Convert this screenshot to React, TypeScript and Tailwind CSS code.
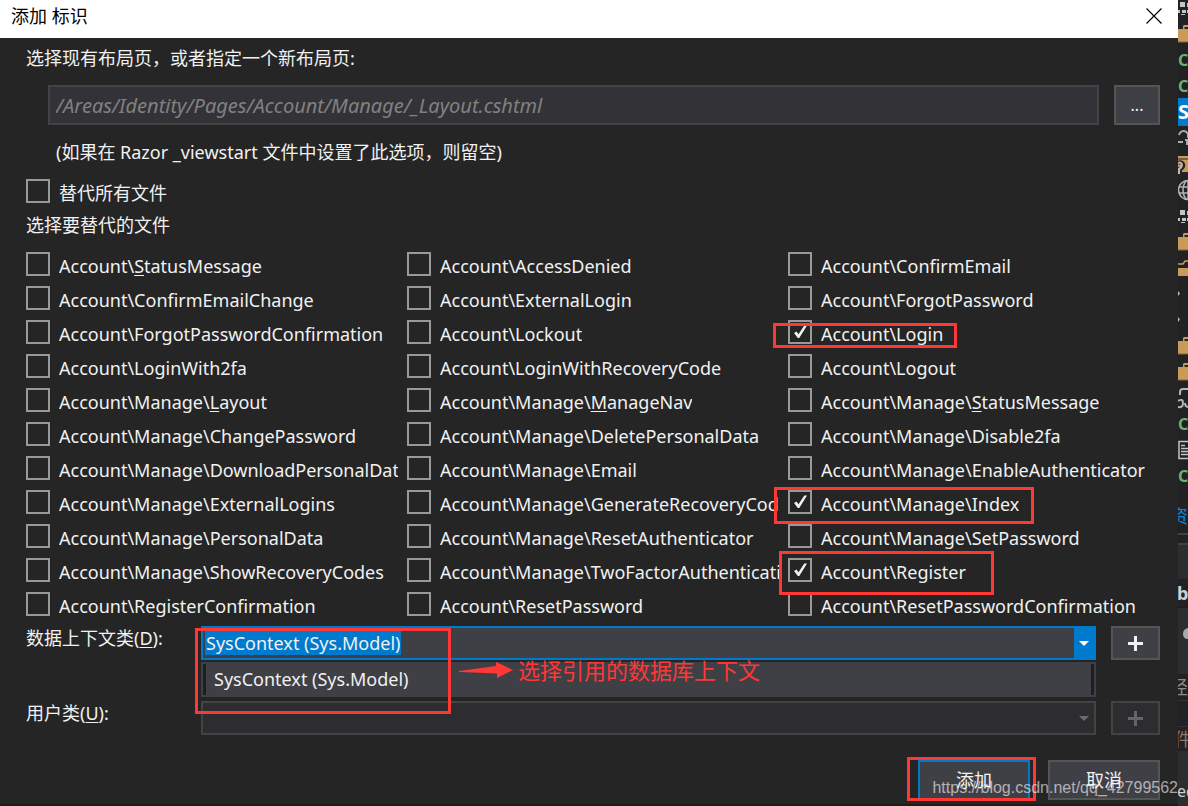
import { ReactNode } from 'react';

type FileOption = { name: string; checked?: boolean; ring?: string };

/* An underscore in a file name marks the next letter as its access key. */
const files: FileOption[] = [
  { name: 'Account\\_StatusMessage' },
  { name: 'Account\\AccessDenied' },
  { name: 'Account\\ConfirmEmail' },
  { name: 'Account\\ConfirmEmailChange' },
  { name: 'Account\\ExternalLogin' },
  { name: 'Account\\ForgotPassword' },
  { name: 'Account\\ForgotPasswordConfirmation' },
  { name: 'Account\\Lockout' },
  { name: 'Account\\Login', checked: true, ring: '-left-[15px] top-[3px] w-[184px] h-[25px]' },
  { name: 'Account\\LoginWith2fa' },
  { name: 'Account\\LoginWithRecoveryCode' },
  { name: 'Account\\Logout' },
  { name: 'Account\\Manage\\_Layout' },
  { name: 'Account\\Manage\\_ManageNav' },
  { name: 'Account\\Manage\\_StatusMessage' },
  { name: 'Account\\Manage\\ChangePassword' },
  { name: 'Account\\Manage\\DeletePersonalData' },
  { name: 'Account\\Manage\\Disable2fa' },
  { name: 'Account\\Manage\\DownloadPersonalData' },
  { name: 'Account\\Manage\\Email' },
  { name: 'Account\\Manage\\EnableAuthenticator' },
  { name: 'Account\\Manage\\ExternalLogins' },
  { name: 'Account\\Manage\\GenerateRecoveryCodes' },
  { name: 'Account\\Manage\\Index', checked: true, ring: '-left-[14px] -top-[3px] w-[260px] h-[37px]' },
  { name: 'Account\\Manage\\PersonalData' },
  { name: 'Account\\Manage\\ResetAuthenticator' },
  { name: 'Account\\Manage\\SetPassword' },
  { name: 'Account\\Manage\\ShowRecoveryCodes' },
  { name: 'Account\\Manage\\TwoFactorAuthentication' },
  { name: 'Account\\Register', checked: true, ring: '-left-[9px] -top-[7px] w-[215px] h-[44px]' },
  { name: 'Account\\RegisterConfirmation' },
  { name: 'Account\\ResetPassword' },
  { name: 'Account\\ResetPasswordConfirmation' },
];

function AccessText({ text }: { text: string }) {
  const i = text.indexOf('_');
  if (i < 0) return <>{text}</>;
  return (
    <>
      {text.slice(0, i)}
      <span className="underline underline-offset-2">{text[i + 1]}</span>
      {text.slice(i + 2)}
    </>
  );
}

function Ring({ className }: { className: string }) {
  return <span aria-hidden="true" className={`pointer-events-none absolute z-20 border-[3px] border-[#ff3835] ${className}`} />;
}

function Check({ children, checked, ring }: { children: ReactNode; checked?: boolean; ring?: string }) {
  return (
    <label className="relative flex h-6 min-w-0 gap-[9px]">
      <span className="grid size-6 shrink-0">
        <input
          type="checkbox"
          defaultChecked={checked}
          className="peer col-start-1 row-start-1 size-6 appearance-none border-2 border-[#999999] bg-[#252526]"
        />
        <svg viewBox="0 0 24 24" className="pointer-events-none col-start-1 row-start-1 hidden size-6 peer-checked:block">
          <path d="M6 13 8.5 11.5 10.5 14.3 16.3 5.5 19 5.5 11.3 18 9.8 18Z" fill="#f1f1f1" />
        </svg>
      </span>
      <span className="h-7 min-w-0 overflow-hidden whitespace-nowrap pt-[2px] leading-6">{children}</span>
      {ring && <Ring className={ring} />}
    </label>
  );
}

function Plus() {
  return (
    <svg viewBox="0 0 15 15" className="mx-auto size-[15px] fill-current">
      <path d="M6 0h3v6h6v3H9v6H6V9H0V6h6z" />
    </svg>
  );
}

function Caret() {
  return (
    <svg viewBox="0 0 10 5" className="h-[5px] w-[10px] fill-current">
      <path d="M0 0h10L5 5z" />
    </svg>
  );
}

const icon = 'block h-[26px] w-[26px] shrink-0';

function Dots() {
  return (
    <svg viewBox="0 0 26 26" className={icon} fill="#c4c4c4">
      <path d="M2 7h5v5H2zM9 8h4v4H9zM0 15h2v3H0zM4 15h4v3H4zM3 19h4v1H3zM9 15h4v3H9z" />
    </svg>
  );
}

function Folder() {
  return (
    <svg viewBox="0 0 26 26" className={icon}>
      <path d="M0 8h5V5l1-1h12v4h4v13H0z" fill="#c89b5b" />
      <path d="M6.5 8V6H20v2z" fill="#252526" />
      <path d="M0 21h22" stroke="#8b6633" />
    </svg>
  );
}

function CSharp() {
  return <span className="block h-[26px] shrink-0 text-base leading-[26px] font-bold text-[#6fb36f]">C#</span>;
}

function Arrow() {
  return (
    <svg viewBox="0 0 26 26" className={icon} fill="#bbb">
      <path d="M0 10l2 2.5-2 2.5z" />
    </svg>
  );
}

function Explorer() {
  return (
    <aside aria-label="解决方案资源管理器" className="flex w-[10px] shrink-0 flex-col overflow-hidden bg-[#222224] text-[#d0d0d0]">
      <div className="-mt-[5px]" />
      <Dots />
      <Folder />
      <CSharp />
      <CSharp />
      <span className="my-[-1px] block h-7 w-[26px] shrink-0 bg-[#007acc] text-xl leading-7 font-bold text-white">S</span>
      <svg viewBox="0 0 26 26" className={icon} fill="none" stroke="#aaa" strokeWidth="2">
        <path d="M1 10c1-4 6-6 9-1v4M0 17h5M7 15h5M9 15v5" />
      </svg>
      <svg viewBox="0 0 26 26" className={icon}>
        <path d="M0 5h20v16H0z" fill="#c89b5b" />
        <path d="M0 8h20" stroke="#252526" />
        <path d="M0 12c6-3 7 5 2 6v6" fill="none" stroke="#222" strokeWidth="4" />
        <path d="M0 12c5-2 5 4 1 6v5" fill="none" stroke="#bbb" strokeWidth="2" />
      </svg>
      <svg viewBox="0 0 26 26" className={icon} fill="none" stroke="#b4b4b4" strokeWidth="1.5">
        <circle cx="10" cy="13" r="9.5" />
        <ellipse cx="10" cy="13" rx="5" ry="9.5" />
        <path d="M1 10h18M1 16h18M10 3v20" />
      </svg>
      <Dots />
      <Folder />
      <svg viewBox="0 0 26 26" className={icon}>
        <path d="M0 9h5l2-3h4" fill="none" stroke="#c89b5b" strokeWidth="1.5" />
        <path d="M0 13h14v8H0z" fill="#c89b5b" />
      </svg>
      <Arrow />
      <Arrow />
      <Folder />
      <Folder />
      <svg viewBox="0 0 26 26" className={icon} fill="none" stroke="#b4b4b4" strokeWidth="2">
        <path d="M2 10V7q0-3 3-3h12M0 16q5-3 5 2 0 5-5 4M7 18q0 4 4 4" />
      </svg>
      <CSharp />
      <svg viewBox="0 0 26 26" className={icon} fill="none" stroke="#c4c4c4">
        <path d="M1 4.5h15v17H1zM3 8.5h4M3 11.5h10M3 14.5h10M3 17.5h10" strokeWidth="1.5" />
      </svg>
      <CSharp />
      <span className="mt-[14px] -ml-2 block h-[26px] w-[26px] shrink-0 text-lg leading-[26px] text-[#1283d8]">资</span>
      <div className="mt-1 h-3 shrink-0 border-y-2 border-[#3f3f46]" />
      <div className="h-[34px] shrink-0 bg-[#2d2d30]" />
      <span className="-ml-px block h-7 shrink-0 text-lg leading-7 font-bold">b</span>
      <div className="h-[67px] shrink-0 border-t border-[#1c1c1e] bg-[#2d2d30] pt-[17px]">
        <svg viewBox="0 0 10 16" className="h-4 w-[10px]" fill="#aaa">
          <path d="M5 9q0-5 5-6v11q-5 0-5-5z" />
        </svg>
      </div>
      <span className="-ml-2 block h-[26px] w-[26px] shrink-0 text-lg leading-[26px] text-[#8a8a8a]">径</span>
      <div className="h-[27px] shrink-0 border-y border-[#333337]" />
      <span className="-ml-1 block h-6 w-[26px] shrink-0 text-lg leading-6 text-[#8a7a66]">件</span>
      <div className="flex-1 bg-[#2d2d30] pt-7">
        <span className="-ml-px block text-base leading-6">ed</span>
      </div>
    </aside>
  );
}

export default function App() {
  return (
    <div className="flex min-h-screen overflow-hidden bg-[#252526] font-['Noto_Sans','Noto_Sans_CJK_SC',sans-serif] text-lg leading-6 text-[#f1f1f1]">
      <div role="dialog" aria-labelledby="dialog-title" className="relative min-w-0 flex-1 border-b-2 border-[#1e1a1e]">
        <header className="flex h-[38px] items-center justify-between bg-white pr-4 pb-[6px] pl-[11px] text-black">
          <h1 id="dialog-title">添加 标识</h1>
          <button type="button" aria-label="关闭" className="grid size-4 place-items-center">
            <svg viewBox="0 0 16 16" className="size-4" fill="none" stroke="#000" strokeWidth="1.2">
              <path d="M.5.5l15 15M15.5.5l-15 15" />
            </svg>
          </button>
        </header>

        <form className="pt-2 pr-[18px] pb-1 pl-[26px]">
          <label htmlFor="layout-page" className="block">选择现有布局页，或者指定一个新布局页:</label>
          <div className="mt-[15px] flex gap-[15px] pl-[22px]">
            <input
              id="layout-page"
              type="text"
              placeholder="/Areas/Identity/Pages/Account/Manage/_Layout.cshtml"
              className="h-10 min-w-0 flex-1 border-2 border-[#434346] bg-[#333337] px-[6px] text-xl italic placeholder:text-[#818181]"
            />
            <button type="button" className="h-10 w-[46px] border-2 border-[#555555] bg-[#3f3f46] text-base">...</button>
          </div>
          <p className="mt-[15px] pl-[30px]">(如果在 Razor _viewstart 文件中设置了此选项，则留空)</p>

          <div className="mt-[15px]">
            <Check>替代所有文件</Check>
          </div>

          <fieldset className="mt-[10px]">
            <legend>选择要替代的文件</legend>
            <div className="mt-[15px] grid grid-cols-3 gap-x-[9px] gap-y-[10px]">
              {files.map((f) => (
                <Check key={f.name} checked={f.checked} ring={f.ring}>
                  <AccessText text={f.name} />
                </Check>
              ))}
            </div>
          </fieldset>

          <div className="mt-[10px] flex gap-[15px]">
            <label htmlFor="context-class" className="w-40 shrink-0">
              <AccessText text="数据上下文类(_D):" />
            </label>
            <div className="relative min-w-0 flex-1">
              <div className="flex h-[34px] border-2 border-[#007acc] bg-[#3f3f46]">
                <div className="grid min-w-0 flex-1 items-center">
                  <input
                    id="context-class"
                    type="text"
                    role="combobox"
                    aria-expanded="true"
                    aria-controls="context-list"
                    defaultValue="SysContext (Sys.Model)"
                    className="field-sizing-content ml-[2px] h-6 justify-self-start bg-[#007acc] px-px outline-none"
                  />
                </div>
                <button type="button" aria-label="打开列表" className="grid w-5 place-items-center bg-[#007acc] text-white">
                  <Caret />
                </button>
              </div>
              <ul id="context-list" role="listbox" className="absolute inset-x-0 top-9 z-10 border-2 border-[#3f3f46] bg-[#1f1f1f] px-[3px]">
                <li role="option" aria-selected="false" className="bg-[#3f3f46] px-2 py-1 leading-[23px]">SysContext (Sys.Model)</li>
              </ul>
              <Ring className="-left-[6px] top-[2px] h-[86px] w-[256px]" />
              <div className="absolute top-8 left-[258px] z-20 flex items-center gap-[5px] text-[22px] leading-6 whitespace-nowrap text-[#ff3835]">
                <svg viewBox="0 0 54 18" className="h-[18px] w-[54px] fill-current">
                  <path d="M0 11L0 10 37 5V1L54 9 38 17V12.5L14 11.5z" />
                </svg>
                选择引用的数据库上下文
              </div>
            </div>
            <button type="button" aria-label="添加数据上下文类" className="h-[34px] w-[49px] border-2 border-[#555555] bg-[#3f3f46]">
              <Plus />
            </button>
          </div>

          <div className="mt-[41px] flex gap-[15px]">
            <label htmlFor="user-class" className="w-40 shrink-0">
              <AccessText text="用户类(_U):" />
            </label>
            <div className="grid min-w-0 flex-1 items-center">
              <select id="user-class" disabled className="col-start-1 row-start-1 h-[34px] w-full appearance-none border-2 border-[#434346] bg-[#2d2d30] opacity-100" />
              <span className="pointer-events-none col-start-1 row-start-1 mr-[7px] justify-self-end text-[#6b6b6b]">
                <Caret />
              </span>
            </div>
            <button type="button" disabled aria-label="添加用户类" className="h-[34px] w-[49px] border-2 border-[#434346] bg-[#2d2d30] text-[#656565]">
              <Plus />
            </button>
          </div>

          <div className="mt-[25px] flex justify-end gap-[18px]">
            <div className="relative">
              <button type="submit" className="h-10 w-28 border-2 border-[#007acc] bg-[#3f3f46]">添加</button>
              <Ring className="-left-[11px] -top-[3px] h-[44px] w-[129px]" />
            </div>
            <button type="button" className="h-10 w-28 border-2 border-[#555555] bg-[#3f3f46]">取消</button>
          </div>
        </form>

        <p className="pointer-events-none absolute right-0 bottom-1 z-30 font-['Liberation_Sans',sans-serif] text-base leading-6 text-white/60">
          https://blog.csdn.net/qq_42799562
        </p>
      </div>
      <Explorer />
    </div>
  );
}
